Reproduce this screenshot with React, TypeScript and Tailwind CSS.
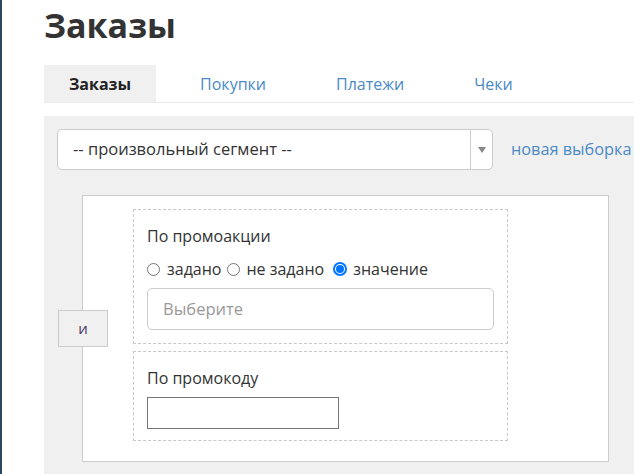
import React from "react";

export default function App() {
  return (
    <div
      className="relative w-[634px] h-[474px] overflow-hidden bg-white border-l-2 border-[#2b4660] text-[#333]"
      style={{ fontFamily: '"Open Sans", "Liberation Sans", Arial, sans-serif' }}
    >
      <div className="pl-[42px]">
        <h1 className="pt-[4px] h-[65px] text-[34px] leading-[43px] font-bold text-[#333]">
          Заказы
        </h1>
        <div className="flex h-[38px] border-b border-[#ebebeb] gap-[18px] text-[16px]">
          <div className="px-[25px] h-[37px] flex items-center bg-[#f0f0f0] font-bold text-[#222]">Заказы</div>
          <div className="px-[26px] h-[37px] flex items-center text-[#4a8ac7]">Покупки</div>
          <div className="px-[26px] h-[37px] flex items-center text-[#4a8ac7]">Платежи</div>
          <div className="px-[26px] h-[37px] flex items-center text-[#4a8ac7]">Чеки</div>
        </div>
        <div className="mt-[13px] bg-[#f0f0f0] h-[400px] pl-[13px] pt-[13px]">
          <div className="flex items-center">
            <div className="w-[436px] h-[41px] bg-white border border-[#cccccc] rounded-[5px] flex items-center">
              <div className="flex-1 pl-[15px] text-[16.5px] text-[#333]">-- произвольный сегмент --</div>
              <div className="w-[22px] h-full border-l border-[#cccccc] flex items-center justify-center">
                <svg width="8" height="6" viewBox="0 0 8 6">
                  <path d="M0 0 L8 0 L4 6 Z" fill="#888" />
                </svg>
              </div>
            </div>
            <div className="ml-[18px] text-[16.3px] text-[#4a8ac7] whitespace-nowrap">новая выборка</div>
          </div>
          <div className="relative ml-[25px] mt-[25px] w-[527px] h-[267px] bg-white border border-[#cccccc] pl-[50px] pt-[13px]">
            <div className="absolute left-[-25px] top-[114px] w-[50px] h-[37px] bg-[#f0f0f0] border border-[#cccccc] flex items-center justify-center text-[15px] text-[#4b3d6b]">
              и
            </div>
            <div className="w-[375px] h-[135px] border border-dashed border-[#c8c8c8] pl-[13px] pt-[15px]">
              <div className="text-[16px] leading-[22px]">По промоакции</div>
              <div className="flex items-center h-[22px] mt-[11px] text-[16px]">
                <span className="w-[13px] h-[13px] rounded-full border border-[#767676] bg-white mr-[7px]" />
                <span>задано</span>
                <span className="w-[13px] h-[13px] rounded-full border border-[#767676] bg-white ml-[6px] mr-[6px]" />
                <span>не задано</span>
                <span className="w-[14px] h-[14px] rounded-full border-[2px] border-[#0075ff] bg-white ml-[9px] mr-[6px] flex items-center justify-center">
                  <span className="w-[8px] h-[8px] rounded-full bg-[#0075ff]" />
                </span>
                <span>значение</span>
              </div>
              <div className="mt-[8px] w-[347px] h-[42px] border border-[#cccccc] rounded-[5px] flex items-center pl-[15px] text-[16.5px] text-[#999]">
                Выберите
              </div>
            </div>
            <div className="mt-[7px] w-[375px] h-[90px] border border-dashed border-[#c8c8c8] pl-[13px] pt-[15px]">
              <div className="text-[16px] leading-[22px]">По промокоду</div>
              <div className="mt-[8px] w-[192px] h-[32px] border border-[#767676] bg-white" />
            </div>
          </div>
        </div>
      </div>
    </div>
  );
}
